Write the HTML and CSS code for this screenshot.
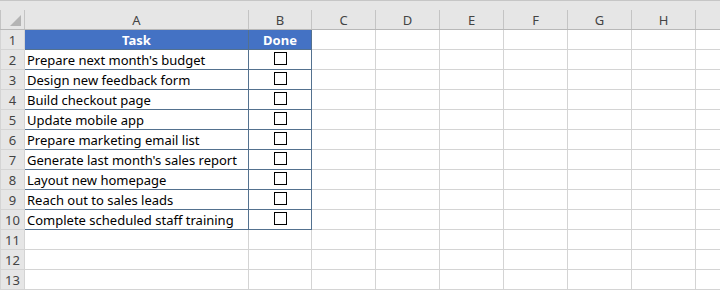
FILE: index.html
```html
<!DOCTYPE html>
<html lang="en">
<head>
    <meta charset="UTF-8">
    <title>Task checklist</title>
    <link rel="stylesheet" href="styles.css">
</head>
<body>
    <div class="ribbon-edge"></div>
    <table class="sheet">
        <colgroup>
            <col class="c-row">
            <col class="c-a">
            <col class="c-b">
            <col class="c-std"><col class="c-std"><col class="c-std"><col class="c-std"><col class="c-std"><col class="c-std">
            <col class="c-rest">
        </colgroup>
        <thead>
            <tr class="col-heads">
                <th class="corner"><span class="tri"></span></th>
                <th>A</th><th>B</th><th>C</th><th>D</th><th>E</th><th>F</th><th>G</th><th>H</th><th></th>
            </tr>
        </thead>
        <tbody>
            <tr>
                <th class="rn">1</th>
                <td class="tbl head">Task</td>
                <td class="tbl head last">Done</td>
                <td></td><td></td><td></td><td></td><td></td><td></td><td></td>
            </tr>
            <tr>
                <th class="rn">2</th>
                <td class="tbl">Prepare next month's budget</td>
                <td class="tbl last"><span class="box"></span></td>
                <td></td><td></td><td></td><td></td><td></td><td></td><td></td>
            </tr>
            <tr>
                <th class="rn">3</th>
                <td class="tbl">Design new feedback form</td>
                <td class="tbl last"><span class="box"></span></td>
                <td></td><td></td><td></td><td></td><td></td><td></td><td></td>
            </tr>
            <tr>
                <th class="rn">4</th>
                <td class="tbl">Build checkout page</td>
                <td class="tbl last"><span class="box"></span></td>
                <td></td><td></td><td></td><td></td><td></td><td></td><td></td>
            </tr>
            <tr>
                <th class="rn">5</th>
                <td class="tbl">Update mobile app</td>
                <td class="tbl last"><span class="box"></span></td>
                <td></td><td></td><td></td><td></td><td></td><td></td><td></td>
            </tr>
            <tr>
                <th class="rn">6</th>
                <td class="tbl">Prepare marketing email list</td>
                <td class="tbl last"><span class="box"></span></td>
                <td></td><td></td><td></td><td></td><td></td><td></td><td></td>
            </tr>
            <tr>
                <th class="rn">7</th>
                <td class="tbl">Generate last month's sales report</td>
                <td class="tbl last"><span class="box"></span></td>
                <td></td><td></td><td></td><td></td><td></td><td></td><td></td>
            </tr>
            <tr>
                <th class="rn">8</th>
                <td class="tbl">Layout new homepage</td>
                <td class="tbl last"><span class="box"></span></td>
                <td></td><td></td><td></td><td></td><td></td><td></td><td></td>
            </tr>
            <tr>
                <th class="rn">9</th>
                <td class="tbl">Reach out to sales leads</td>
                <td class="tbl last"><span class="box"></span></td>
                <td></td><td></td><td></td><td></td><td></td><td></td><td></td>
            </tr>
            <tr>
                <th class="rn">10</th>
                <td class="tbl">Complete scheduled staff training</td>
                <td class="tbl last"><span class="box"></span></td>
                <td></td><td></td><td></td><td></td><td></td><td></td><td></td>
            </tr>
            <tr>
                <th class="rn">11</th>
                <td></td><td></td><td></td><td></td><td></td><td></td><td></td><td></td><td></td>
            </tr>
            <tr>
                <th class="rn">12</th>
                <td></td><td></td><td></td><td></td><td></td><td></td><td></td><td></td><td></td>
            </tr>
            <tr>
                <th class="rn">13</th>
                <td></td><td></td><td></td><td></td><td></td><td></td><td></td><td></td><td></td>
            </tr>
        </tbody>
    </table>
</body>
</html>
```

FILE: styles.css
```css
body {
    margin: 0;
    background: #fff;
    font-family: "Noto Sans", Arial, sans-serif;
    overflow: hidden;
}
.ribbon-edge {
    height: 9px;
    background: #e6e6e6;
    border-top: 1px solid #c6c6c6;
}
.sheet {
    border-collapse: collapse;
    table-layout: fixed;
    width: 720px;
}
.c-row { width: 24px; }
.c-a { width: 224px; }
.c-b { width: 63px; }
.c-std { width: 64px; }
.c-rest { width: 25px; }
.sheet td, .sheet th {
    height: 19px;
    padding: 0;
    border: 1px solid #d4d4d4;
    white-space: nowrap;
    overflow: hidden;
}
.col-heads th {
    border-top: none;
    background: #e6e6e6;
    border-color: #c4c4c4;
    border-bottom-color: #b8b8b8;
    color: #444;
    font-weight: normal;
    font-size: 13px;
    text-align: center;
    vertical-align: middle;
}
.corner {
    position: relative;
    border-left: none;
}
.tri {
    position: absolute;
    right: 3px;
    bottom: 3px;
    width: 0;
    height: 0;
    border-left: 11px solid transparent;
    border-bottom: 11px solid #b4b4b4;
}
.rn {
    background: #e6e6e6;
    border-color: #c4c4c4;
    border-left: none;
    color: #444;
    font-weight: normal;
    font-size: 13px;
    text-align: center;
    vertical-align: middle;
}
.sheet td {
    font-size: 13px;
    color: #000;
    vertical-align: bottom;
    line-height: 17px;
    padding-left: 2px;
}
.sheet td.tbl {
    border-color: #53718f;
}
.sheet td.head {
    background: #4472c4;
    color: #fff;
    font-weight: bold;
    text-align: center;
    padding-left: 0;
}
.sheet td.last {
    text-align: center;
    padding-left: 0;
}
.box {
    display: inline-block;
    width: 11px;
    height: 11px;
    border: 1px solid #000;
    vertical-align: top;
    margin-bottom: 4px;
    margin-left: 1px;
}
```
